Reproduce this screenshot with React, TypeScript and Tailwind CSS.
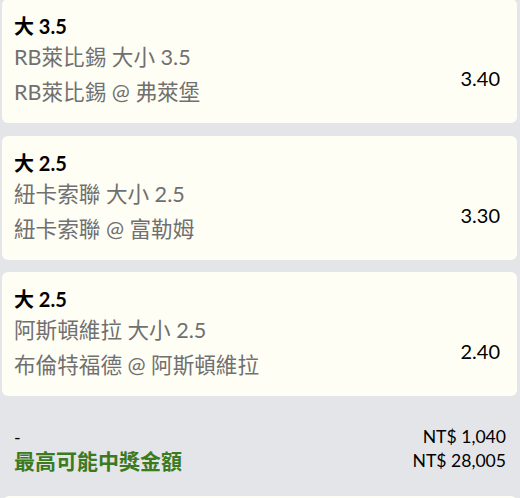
import React from "react";

const FONT = { fontFamily: "Lato, 'Noto Sans CJK TC', sans-serif" };

type Bet = { title: string; line: string; match: string; odds: string };

const bets: Bet[] = [
  { title: "大 3.5", line: "RB萊比錫 大小 3.5", match: "RB萊比錫 @ 弗萊堡", odds: "3.40" },
  { title: "大 2.5", line: "紐卡索聯 大小 2.5", match: "紐卡索聯 @ 富勒姆", odds: "3.30" },
  { title: "大 2.5", line: "阿斯頓維拉 大小 2.5", match: "布倫特福德 @ 阿斯頓維拉", odds: "2.40" },
];

function Card({ bet, first }: { bet: Bet; first?: boolean }) {
  return (
    <div
      className={`ml-[2px] mr-[3px] h-[124px] rounded-[6px] bg-[#fffef5] pl-[12px] pr-[17px] pt-[15px] ${first ? "-mt-px" : ""}`}
    >
      <div className="h-[24px] text-[20px] leading-[24px] font-bold text-black">{bet.title}</div>
      <div className="flex items-center">
        <div className="flex flex-1 flex-col gap-[3px] pt-[3px]">
          <div className="h-[32px] text-[21.6px] leading-[32px] text-[#707070]">{bet.line}</div>
          <div className="h-[32px] text-[21.6px] leading-[32px] text-[#707070]">{bet.match}</div>
        </div>
        <div className="pt-[10px] text-[20px] text-black">{bet.odds}</div>
      </div>
    </div>
  );
}

export default function App() {
  return (
    <div className="h-[498px] w-[520px] overflow-hidden bg-[#e4e5e8]" style={FONT}>
      <div className="flex flex-col gap-[12.5px]">
        {bets.map((b, i) => (
          <Card key={i} bet={b} first={i === 0} />
        ))}
      </div>
      <div className="flex h-[100px] items-start justify-between pl-[14px] pr-[14px] pt-[29px]">
        <div className="flex flex-col">
          <div className="h-[24px] text-[18px] leading-[24px] text-black">-</div>
          <div className="h-[24px] text-[21px] leading-[24px] font-bold text-[#3b7a1f]">最高可能中獎金額</div>
        </div>
        <div className="flex flex-col items-end">
          <div className="h-[24px] text-[17.6px] leading-[24px] text-black">NT$ 1,040</div>
          <div className="h-[24px] text-[17.6px] leading-[24px] text-black">NT$ 28,005</div>
        </div>
      </div>
      <div className="h-[20px] rounded-t-[10px] bg-[#fffef5]" />
    </div>
  );
}
